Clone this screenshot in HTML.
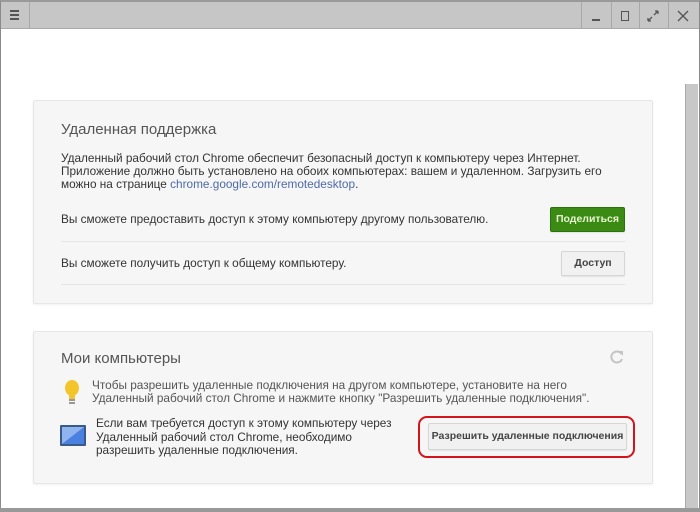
<!DOCTYPE html>
<html><head><meta charset="utf-8"><style>
*{margin:0;padding:0;box-sizing:border-box}
body{width:700px;height:512px;overflow:hidden;background:#fff;font-family:"Liberation Sans",Arial,sans-serif;position:relative;color:#333}
.abs{position:absolute}
#frame{left:0;top:0;width:700px;height:512px;border:1px solid #8a8a8a;border-top:2px solid #9a9a9a}
#bar{left:1px;top:2px;width:698px;height:27px;background:#c6c6c6;border-bottom:1px solid #aaa}
.sep{top:2px;width:1px;height:27px;background:#a8a8a8}
.card{background:#f6f6f6;border:1px solid #e6e6e6;border-radius:2px;box-shadow:0 1px 2px rgba(0,0,0,.06)}
.t{font-size:11.8px;line-height:13px;color:#333;white-space:nowrap}
.h{font-size:15px;color:#555;white-space:nowrap}
.line{height:1px;background:#e4e4e4}
.btn{border:1px solid #d6d6d6;background:#f1f1f1;border-radius:2px;font-size:10.5px;font-weight:bold;color:#444;text-align:center;white-space:nowrap;box-shadow:0 1px 1px rgba(0,0,0,.08)}
</style></head><body>
<div class="abs" id="bar"></div>
<div class="abs sep" style="left:29px"></div>
<div class="abs sep" style="left:581px"></div>
<div class="abs sep" style="left:611px"></div>
<div class="abs sep" style="left:639px"></div>
<div class="abs sep" style="left:668px"></div>
<div class="abs" style="left:10px;top:10px;width:9px;height:2px;background:#555"></div>
<div class="abs" style="left:10px;top:14px;width:9px;height:2px;background:#555"></div>
<div class="abs" style="left:10px;top:18px;width:9px;height:2px;background:#555"></div>
<div class="abs" style="left:592px;top:19px;width:8px;height:2px;background:#555"></div>
<div class="abs" style="left:621px;top:11px;width:8px;height:10px;border:1.5px solid #555"></div>
<svg class="abs" style="left:647px;top:10px" width="12" height="12"><path d="M1 11L5 7M1 11V8M1 11H4M11 1L7 5M11 1V4M11 1H8" stroke="#555" stroke-width="1.3" fill="none"/></svg>
<svg class="abs" style="left:677px;top:10px" width="12" height="12"><path d="M1 1L11 11M11 1L1 11" stroke="#555" stroke-width="1.3"/></svg>
<div class="abs" id="frame"></div>
<div class="abs" style="left:685px;top:84px;width:13px;height:426px;background:#c8c8c8;border-left:1px solid #aaa"></div>
<div class="abs" style="left:0;top:508px;width:700px;height:4px;background:#999"></div>

<div class="abs card" style="left:33px;top:100px;width:620px;height:204px"></div>
<div class="abs h" style="left:61px;top:121px">Удаленная поддержка</div>
<div class="abs t" style="left:61px;top:152px">Удаленный рабочий стол Chrome обеспечит безопасный доступ к компьютеру через Интернет.<br>Приложение должно быть установлено на обоих компьютерах: вашем и удаленном. Загрузить его<br>можно на странице <span style="color:#4d6aa8">chrome.google.com/remotedesktop</span>.</div>
<div class="abs t" style="left:61px;top:213px">Вы сможете предоставить доступ к этому компьютеру другому пользователю.</div>
<div class="abs btn" style="left:550px;top:207px;width:75px;height:25px;line-height:23px;background:#3a8a14;border-color:#2d7010;color:#e8f5d0">Поделиться</div>
<div class="abs line" style="left:61px;top:241px;width:564px"></div>
<div class="abs t" style="left:61px;top:257px">Вы сможете получить доступ к общему компьютеру.</div>
<div class="abs btn" style="left:561px;top:251px;width:64px;height:25px;line-height:23px">Доступ</div>
<div class="abs line" style="left:61px;top:284px;width:564px"></div>

<div class="abs card" style="left:33px;top:331px;width:620px;height:153px"></div>
<div class="abs h" style="left:61px;top:350px">Мои компьютеры</div>
<svg class="abs" style="left:609px;top:349px" width="16" height="16"><path d="M12.5 5A5.5 5.5 0 1 0 13 10" stroke="#c4c4c4" stroke-width="2" fill="none"/><path d="M9 2L14 2L14 7Z" fill="#c4c4c4"/></svg>
<svg class="abs" style="left:64px;top:379px" width="16" height="28"><ellipse cx="8" cy="9" rx="7" ry="8" fill="#f3c52a"/><rect x="5" y="15" width="6" height="5" fill="#f3c52a"/><rect x="5" y="20" width="6" height="2" fill="#999"/><rect x="5" y="23" width="6" height="2" fill="#999"/></svg>
<div class="abs t" style="left:92px;top:379px;color:#555">Чтобы разрешить удаленные подключения на другом компьютере, установите на него<br>Удаленный рабочий стол Chrome и нажмите кнопку "Разрешить удаленные подключения".</div>
<svg class="abs" style="left:59px;top:424px" width="28" height="23"><rect x="1" y="1" width="26" height="21" fill="#3a5a8a" rx="1"/><rect x="3" y="3" width="22" height="17" fill="#8fb4ee"/><path d="M3 20L25 3V20Z" fill="#4a80e0"/></svg>
<div class="abs t" style="left:96px;top:417px;line-height:13.5px">Если вам требуется доступ к этому компьютеру через<br>Удаленный рабочий стол Chrome, необходимо<br>разрешить удаленные подключения.</div>
<div class="abs btn" style="left:428px;top:423px;width:199px;height:27px;line-height:25px">Разрешить удаленные подключения</div>
<div class="abs" style="left:418px;top:416px;width:217px;height:42px;border:2px solid #d3141c;border-radius:9px"></div>
</body></html>
